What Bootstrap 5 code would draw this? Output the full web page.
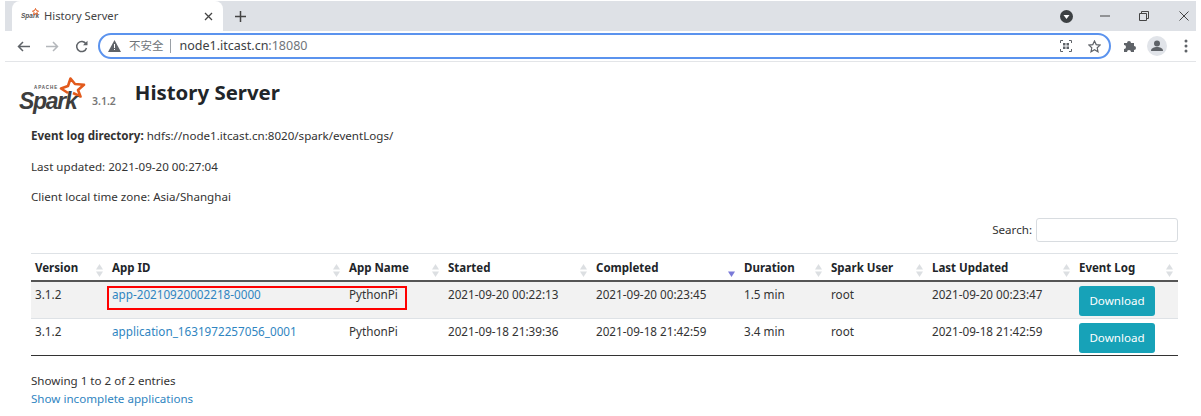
<!DOCTYPE html>
<html lang="zh-CN">
<head>
  <meta charset="UTF-8">
  <title>History Server</title>
  <meta name="viewport" content="width=device-width, initial-scale=1">
  <link href="https://cdn.jsdelivr.net/npm/bootstrap@5.3.3/dist/css/bootstrap.min.css" rel="stylesheet">
  <style>
    body { font-family: "Noto Sans", "Noto Sans CJK SC", sans-serif; font-size: 11.6px; color: #333; background: #fff; overflow: hidden; }
    .shot { padding: 1px 5px 0; }
    /* browser chrome */
    .tab-strip { height: 30px; background: #dee1e6; padding-left: 7px; }
    .tab-page { width: 211px; height: 30px; background: #fff; border-radius: 8px 8px 0 0; padding: 0 10px 0 9px; color: #444; font-size: 11.2px; }
    .tab-fav { width: 23px; font-family: "Liberation Sans", sans-serif; font-size: 6.5px; font-style: italic; font-weight: 700; color: #555; position: relative; }
    .fav-star { position: absolute; left: 11px; top: -3px; }
    .tab-plus { margin-left: 12px; }
    .win-btns { padding-right: 7px; }
    .win-min { margin-left: 27px; }
    .win-max { margin-left: 29px; }
    .win-close { margin-left: 30px; }
    .tool-strip { height: 31px; border-bottom: 1px solid #e3e5e8; padding: 0 8px 0 12px; }
    .omni { height: 26px; border: 2px solid #5b93ee; border-radius: 13px; flex: 1; margin-left: 10px; padding: 0 8px 0 8px; font-size: 12.5px; color: #3c4043; }
    .omni-warn { color: #70757a; font-size: 11.5px; }
    .omni-port { color: #70757a; }
    .omni-sep { width: 1px; height: 14px; background: #9aa0a6; margin: 0 9px 0 6px; }
    .ext-icon { margin-left: 12px; }
    .avatar-icon { margin-left: 10px; }
    .dots-icon { margin-left: 17px; }
    /* page */
    .page-body { padding: 10px 18px 0 26px; }
    .brand-row { height: 46px; margin-left: -12px; }
    .spark-logo { width: 68px; height: 36px; position: relative; }
    .spark-word { font-family: "Liberation Sans", sans-serif; font-style: italic; font-weight: 700; font-size: 23px; letter-spacing: -1.3px; line-height: 1; color: #3d3d3d; position: absolute; left: 0; bottom: 0; }
    .spark-apache { font-family: "Liberation Sans", sans-serif; font-weight: 700; font-size: 4.5px; letter-spacing: .9px; line-height: 1; color: #555; position: absolute; left: 15px; top: 9px; }
    .spark-star { position: absolute; left: 40px; top: 0; }
    .spark-ver { font-size: 10.5px; font-weight: 600; color: #777; margin: 14px 0 0 5px; }
    .page-title { font-size: 20.4px; font-weight: 700; color: #212529; margin: 0 0 0 19px; line-height: 1; padding-bottom: 5px; }
    .info-line { margin: 0; height: 31px; line-height: 18px; }
    .first-line { margin-top: 9px; }
    .mid-line { height: 30px; }
    .search-row { height: 26px; margin: -2px 0 10px; gap: 4px; }
    .search-input { width: 142px; height: 24px; border: 1px solid #d8dce0; border-radius: 3px; background: #fff; }
    .table-wrap { position: relative; }
    .hist-table { table-layout: fixed; width: 1147px; margin: 0; color: #333; font-size: 11.7px; border-top: 1px solid #dee2e6; border-bottom: 1px solid #333; }
    .hist-table th { height: 27px; padding: 1px 4px 0; border-bottom: 2px solid #555; font-size: 11.5px; font-weight: 700; color: #212529; position: relative; vertical-align: middle; }
    .hist-table td { padding: 4px 4px 0; vertical-align: top; border-bottom: 1px solid #dee2e6; }
    .hist-table tr:last-child td { border-bottom: 0; }
    .row-a td { height: 38px; background: #f2f2f2; }
    .row-b td { height: 37px; }
    .row-a a, .row-b a, .foot-link { color: #2f85c1; text-decoration: none; }
    .sort-mark { position: absolute; right: 5px; bottom: 3px; width: 7px; height: 13px; }
    .btn-dl { background: #17a2b8; border: 0; color: #fff; font-size: 11.6px; border-radius: 3px; padding: 0; width: 76px; height: 30px; line-height: 30px; }
    .mark-box { position: absolute; left: 76px; top: 33px; width: 300px; height: 24px; border: 2px solid #f00; pointer-events: none; }
    .foot-info { margin-top: 16px; line-height: 18px; }
  </style>
</head>
<body>
  <div class="shot">
    <!-- tab strip -->
    <div class="tab-strip d-flex align-items-center">
      <div class="tab-page d-flex align-items-center">
        <span class="tab-fav">Spark<svg class="fav-star" width="7" height="7" viewBox="0 0 7 7"><path d="M3.500 .5l1 2.200 2 .3-1.500 1.500.4 2-1.900-1-1.900 1 .4-2L.5 3l2-.3z" fill="none" stroke="#e25a1c"/></svg></span>
        <span class="flex-grow-1">History Server</span>
        <svg width="9" height="9" viewBox="0 0 9 9"><path d="M1 1l7 7M8 1L1 8" stroke="#444" stroke-width="1.3"/></svg>
      </div>
      <svg class="tab-plus" width="11" height="11" viewBox="0 0 11 11"><path d="M5.500 0v11M0 5.500h11" stroke="#444" stroke-width="1.500"/></svg>
      <div class="win-btns ms-auto d-flex align-items-center">
        <svg width="13" height="13" viewBox="0 0 13 13"><circle cx="6.500" cy="6.500" r="6.500" fill="#3c4043"/><path d="M3.500 5h6l-3 4z" fill="#fff"/></svg>
        <svg class="win-min" width="10" height="10" viewBox="0 0 10 10"><path d="M0 5h10" stroke="#444"/></svg>
        <svg class="win-max" width="10" height="10" viewBox="0 0 10 10"><path d="M.5 2.500h7v7h-7zM2.500 2.500v-2h7v7h-2" fill="none" stroke="#444"/></svg>
        <svg class="win-close" width="10" height="10" viewBox="0 0 10 10"><path d="M.5.5l9 9M9.500.5l-9 9" stroke="#444"/></svg>
      </div>
    </div>
    <!-- address bar -->
    <div class="tool-strip d-flex align-items-center">
      <svg width="13" height="11" viewBox="0 0 13 11"><path d="M13 5.500H2M6 1L1.500 5.500 6 10" fill="none" stroke="#5f6368" stroke-width="1.500"/></svg>
      <svg class="ms-3" width="13" height="11" viewBox="0 0 13 11"><path d="M0 5.500h11M7 1l4.500 4.500L7 10" fill="none" stroke="#b4b7bb" stroke-width="1.500"/></svg>
      <svg class="ms-3" width="13" height="13" viewBox="0 0 13 13"><path d="M11 4A5 5 0 1 0 11.500 8" fill="none" stroke="#5f6368" stroke-width="1.500"/><path d="M12.500 .8v4.500H8z" fill="#5f6368"/></svg>
      <div class="omni d-flex align-items-center">
        <svg class="me-1" width="13" height="12" viewBox="0 0 13 12"><path d="M6.500 0L13 12H0z" fill="#5f6368"/><path d="M6 4h1v4H6zM6 9h1v1H6z" fill="#fff"/></svg>
        <span class="omni-warn ms-1">不安全</span>
        <span class="omni-sep"></span>
        <span>node1.itcast.cn<span class="omni-port">:18080</span></span>
        <svg class="ms-auto" width="12" height="12" viewBox="0 0 12 12"><path d="M.5 3V.5H3M9 .5h2.500V3M11.500 9v2.500H9M3 11.500H.5V9" fill="none" stroke="#5f6368"/><path d="M3 3h2.500v2.500H3zM6.500 3H9v2.500H6.500zM3 6.500h2.500V9H3zM6.500 6.500H9V9H6.500z" fill="#5f6368"/></svg>
        <svg class="ms-3" width="13" height="13" viewBox="0 0 13 13"><path d="M6.500 1l1.700 3.600 3.900.5-2.900 2.700.8 3.900-3.500-2-3.500 2 .8-3.900L.9 5.100l3.900-.5z" fill="none" stroke="#5f6368" stroke-width="1.200"/></svg>
      </div>
      <svg class="ext-icon" width="14" height="14" viewBox="0 0 14 14"><path d="M1 4h3a2 2 0 0 1 4 0h3v3a2 2 0 0 1 0 4v2H8a2 2 0 0 0-4 0H1v-3a2 2 0 0 0 0-4z" fill="#5f6368"/></svg>
      <svg class="avatar-icon" width="20" height="20" viewBox="0 0 20 20"><circle cx="10" cy="10" r="10" fill="#e1e4e9"/><circle cx="10" cy="7.500" r="3" fill="#5f6368"/><path d="M4 15c0-3 3-4 6-4s6 1 6 4z" fill="#5f6368"/></svg>
      <svg class="dots-icon" width="4" height="14" viewBox="0 0 4 14"><circle cx="2" cy="2" r="1.500" fill="#5f6368"/><circle cx="2" cy="7" r="1.500" fill="#5f6368"/><circle cx="2" cy="12" r="1.500" fill="#5f6368"/></svg>
    </div>

    <!-- spark ui -->
    <div class="page-body">
      <div class="brand-row d-flex align-items-center">
        <div class="spark-logo">
          <svg class="spark-star" width="27" height="21" viewBox="0 0 27 21"><path d="M9 16L2 11.500l7-2.500L11.500 1.500 16 7l9 .8-6 5.200 2.500 6.500L14 16" fill="none" stroke="#e25a1c" stroke-width="2.600" stroke-linejoin="round"/></svg>
          <span class="spark-apache">APACHE</span>
          <span class="spark-word">Spark</span>
        </div>
        <span class="spark-ver">3.1.2</span>
        <h3 class="page-title">History Server</h3>
      </div>
      <p class="info-line first-line"><strong>Event log directory:</strong> hdfs://node1.itcast.cn:8020/spark/eventLogs/</p>
      <p class="info-line mid-line">Last updated: 2021-09-20 00:27:04</p>
      <p class="info-line">Client local time zone: Asia/Shanghai</p>
      <div class="search-row d-flex justify-content-end align-items-center">
        <label for="search">Search:</label>
        <input id="search" class="search-input" type="text">
      </div>
      <div class="table-wrap">
        <table class="table hist-table">
          <colgroup>
            <col style="width:77px"><col style="width:237px"><col style="width:99px"><col style="width:148px"><col style="width:148px"><col style="width:87px"><col style="width:101px"><col style="width:147px"><col style="width:103px">
          </colgroup>
          <thead>
            <tr id="head-row"></tr>
          </thead>
          <tbody>
            <tr class="row-a">
              <td>3.1.2</td>
              <td><a href="#">app-20210920002218-0000</a></td>
              <td>PythonPi</td>
              <td>2021-09-20 00:22:13</td>
              <td>2021-09-20 00:23:45</td>
              <td>1.5 min</td>
              <td>root</td>
              <td>2021-09-20 00:23:47</td>
              <td><button class="btn btn-dl" type="button">Download</button></td>
            </tr>
            <tr class="row-b">
              <td>3.1.2</td>
              <td><a href="#">application_1631972257056_0001</a></td>
              <td>PythonPi</td>
              <td>2021-09-18 21:39:36</td>
              <td>2021-09-18 21:42:59</td>
              <td>3.4 min</td>
              <td>root</td>
              <td>2021-09-18 21:42:59</td>
              <td><button class="btn btn-dl" type="button">Download</button></td>
            </tr>
          </tbody>
        </table>
        <div class="mark-box"></div>
      </div>
      <div class="foot-info">
        <div>Showing 1 to 2 of 2 entries</div>
        <a class="foot-link" href="#">Show incomplete applications</a>
      </div>
    </div>
  </div>

  <script src="https://cdn.jsdelivr.net/npm/bootstrap@5.3.3/dist/js/bootstrap.bundle.min.js"></script>
  <script>
    const heads = ['Version', 'App ID', 'App Name', 'Started', 'Completed', 'Duration', 'Spark User', 'Last Updated', 'Event Log'];
    const sortedCol = 4;
    const bothArrows = '<path d="M3.500 0L7 5.500H0z" fill="#dcdfe2"/><path d="M3.500 13L7 7.500H0z" fill="#dcdfe2"/>';
    const downArrow = '<path d="M3.500 13L7 7.500H0z" fill="#7a7ad8"/>';
    document.getElementById('head-row').innerHTML = heads.map((name, i) =>
      `<th>${name}<svg class="sort-mark" viewBox="0 0 7 13">${i === sortedCol ? downArrow : bothArrows}</svg></th>`
    ).join('');
  </script>
</body>
</html>
